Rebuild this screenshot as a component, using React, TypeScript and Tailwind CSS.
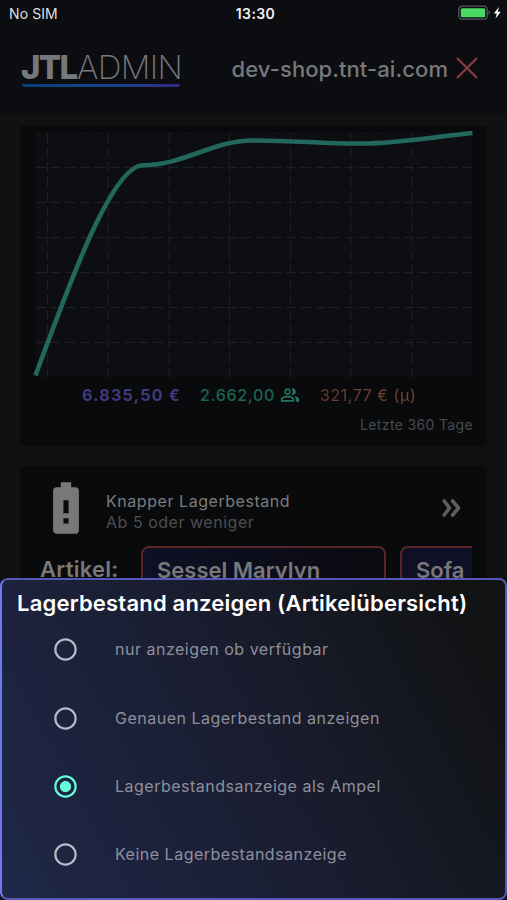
import React, { useState } from "react";
import {
  MdBatteryAlert,
  MdOutlinePeopleAlt,
  MdRadioButtonChecked,
  MdRadioButtonUnchecked,
} from "react-icons/md";

const options = [
  "nur anzeigen ob verfügbar",
  "Genauen Lagerbestand anzeigen",
  "Lagerbestandsanzeige als Ampel",
  "Keine Lagerbestandsanzeige",
];

const StatusBar = () => (
  <div className="grid h-7 grid-cols-3 items-center pb-[2px] pl-[9px] pr-[5px] text-[14px] text-[#dedede]">
    <span className="tracking-[0.1px]">No SIM</span>
    <span className="text-center font-semibold tracking-[0.4px] text-[#f0f0f0]">13:30</span>
    <div className="flex items-center justify-end">
      <svg width="44" height="16" viewBox="0 0 44 16">
        <rect x="0.8" y="1.2" width="28.4" height="13" rx="3.5" fill="none" stroke="#56595c" strokeWidth="1.3" />
        <rect x="2.8" y="3.2" width="24.4" height="9" rx="1.5" fill="#4bd964" />
        <path d="M30.6 5.5c1.8.6 1.8 3.8 0 4.4z" fill="#56595c" />
        <path d="M41 2 35.8 8.6h3l-1.4 5.2 5.4-7h-3z" fill="#fff" />
      </svg>
    </div>
  </div>
);

const Header = () => (
  <header className="flex h-[86px] items-center justify-between pb-[4px] pl-[21px] pr-[29px]">
    <div className="mt-[3px] flex w-[162px] flex-col">
      <div className="flex h-[27px] items-center whitespace-nowrap pt-px text-[33px] leading-[27px] text-[#77787b]">
        <span className="font-extrabold tracking-[-1.6px]">JTL</span>
        <span className="font-extralight tracking-[-0.6px]">ADMIN</span>
      </div>
      <svg className="mt-[3px]" width="160" height="4" viewBox="0 0 160 4">
        <defs>
          <linearGradient id="underline" x1="0" x2="1">
            <stop offset="0" stopColor="#08427c" />
            <stop offset="0.65" stopColor="#17428d" />
            <stop offset="1" stopColor="#35288a" />
          </linearGradient>
        </defs>
        <path d="M0 0h159l-1 3H3z" fill="url(#underline)" />
      </svg>
    </div>
    <div className="flex items-center text-[#77787b]">
      <span className="whitespace-nowrap text-[22px] font-medium tracking-[0.08px]">dev-shop.tnt-ai.com</span>
      <svg className="ml-[8px] -mt-[2px]" width="22" height="22" viewBox="0 0 22 22">
        <path d="M1 1 21 21M21 1 1 21" stroke="#853a40" strokeWidth="2.4" />
      </svg>
    </div>
  </header>
);

const rows = [36, 71, 106, 141, 176, 211];
const cols = [12.5, 73, 134, 194.5, 255.5, 316, 377];

const SalesChart = () => (
  <svg className="block overflow-visible" width="438" height="245" viewBox="0 0 438 245">
    <rect x="1" y="1" width="437" height="244" fill="#0c0e12" />
    <g stroke="#1e2023" strokeWidth="1" strokeDasharray="10 4.7">
      <path d="M1 1.5H437" stroke="#111317" />
      {rows.map((y) => (
        <path key={y} d={`M1 ${y - 0.5}H437`} />
      ))}
      {cols.map((x) => (
        <path key={x} d={`M${x} 1V245`} />
      ))}
    </g>
    <path
      d="M.5 243.5C35 150 77 33.5 108 33.2C147 33.5 179 8.5 217 8.5C255 8 291 12 327 11.5C363 11.5 401 4.5 437.5 1"
      fill="none"
      stroke="#23685d"
      strokeWidth="4.6"
    />
  </svg>
);

const SalesCard = () => (
  <section className="h-[321px] rounded-b-lg bg-[#090a0c] px-[15px] pt-[6px]">
    <SalesChart />
    <div className="mt-[6px] flex h-6 items-center whitespace-nowrap pl-[47px] text-[16px]">
      <span className="w-[118px] font-bold tracking-[1.25px] text-[#40397b]">6.835,50 €</span>
      <span className="w-[80px] font-medium tracking-[0.7px] text-[#1f6453]">2.662,00</span>
      <MdOutlinePeopleAlt className="mr-[19px] size-5 text-[#237463]" />
      <span className="ml-px bg-linear-to-r from-[#693b35] to-[#70482f] bg-clip-text tracking-[0.55px] text-transparent">
        321,77 € (µ)
      </span>
    </div>
    <p className="-mr-px mt-[8px] text-right text-[14px] leading-5 tracking-[0.35px] text-[#484a4c]">Letzte 360 Tage</p>
  </section>
);

const StockCard = () => (
  <section className="mt-[18px] h-[160px] rounded-lg bg-[#090a0b] pl-5 pr-[15px] pt-3">
    <div className="flex items-center">
      <MdBatteryAlert className="-ml-[5px] size-[62px] shrink-0 text-[#77787a]" />
      <div className="ml-[9px] mt-[7px] flex-1 text-[16px] leading-[21px]">
        <p className="tracking-[0.55px] text-[#7b7c7e]">Knapper Lagerbestand</p>
        <p className="tracking-[0.52px] text-[#4d4e50]">Ab 5 oder weniger</p>
      </div>
      <svg className="mr-[11px]" width="19" height="18" viewBox="0 0 19 18">
        <path
          d="m2.2 2 5.3 7-5.3 7M10.6 2l5.9 7-5.9 7"
          fill="none"
          stroke="#5c5e60"
          strokeWidth="3.6"
          strokeLinecap="round"
          strokeLinejoin="round"
        />
      </svg>
    </div>
    <div className="mt-[7px] flex overflow-hidden whitespace-nowrap text-[22px] font-semibold leading-[45px] text-[#77787b]">
      <span className="w-[101px] shrink-0 pt-px tracking-[0.25px]">Artikel:</span>
      <div className="mr-[14px] w-[245px] shrink-0 rounded-lg border-2 border-[#5a2429] bg-linear-to-r from-[#0f1025] to-[#0a0a10] pl-[14px]">
        Sessel Marylyn
      </div>
      <div className="w-[245px] shrink-0 rounded-lg border-2 border-[#5a2429] bg-[#0f1025] pl-[14px]">Sofa</div>
    </div>
  </section>
);

const StockSheet = () => {
  const [selected, setSelected] = useState(2);

  return (
    <div
      role="radiogroup"
      className="absolute inset-x-0 bottom-0 h-[322px] rounded-lg border-2 border-[#5558b8] border-l-[#6f78ee] bg-linear-[62deg] from-[#1f2849] via-[#1a1d30] via-50% to-[#111314] to-92% pt-[11px]"
    >
      <h2 className="h-[25px] whitespace-nowrap pl-[15px] text-[22px] font-semibold leading-[25px] tracking-[0.2px] text-white">
        Lagerbestand anzeigen (Artikelübersicht)
      </h2>
      {options.map((label, idx) => (
        <button
          key={label}
          type="button"
          role="radio"
          aria-checked={selected === idx}
          onClick={() => setSelected(idx)}
          className="flex h-[68.4px] w-full items-center whitespace-nowrap pl-[50px] text-left text-[16px] text-[#8d909b]"
        >
          {selected === idx ? (
            <MdRadioButtonChecked className="-mt-px size-[27px] text-[#64ffda]" />
          ) : (
            <MdRadioButtonUnchecked className="-mt-px size-[27px] text-[#b9bcc7]" />
          )}
          <span className="-mt-[2px] ml-[36px] tracking-[0.5px]">{label}</span>
        </button>
      ))}
    </div>
  );
};

export default function App() {
  return (
    <div className="relative h-[900px] w-[507px] overflow-hidden bg-[#111111] font-['Inter',sans-serif]">
      <div className="bg-[#0c0d11]">
        <StatusBar />
        <Header />
      </div>
      <main className="px-5 pt-3">
        <SalesCard />
        <StockCard />
      </main>
      <StockSheet />
    </div>
  );
}
